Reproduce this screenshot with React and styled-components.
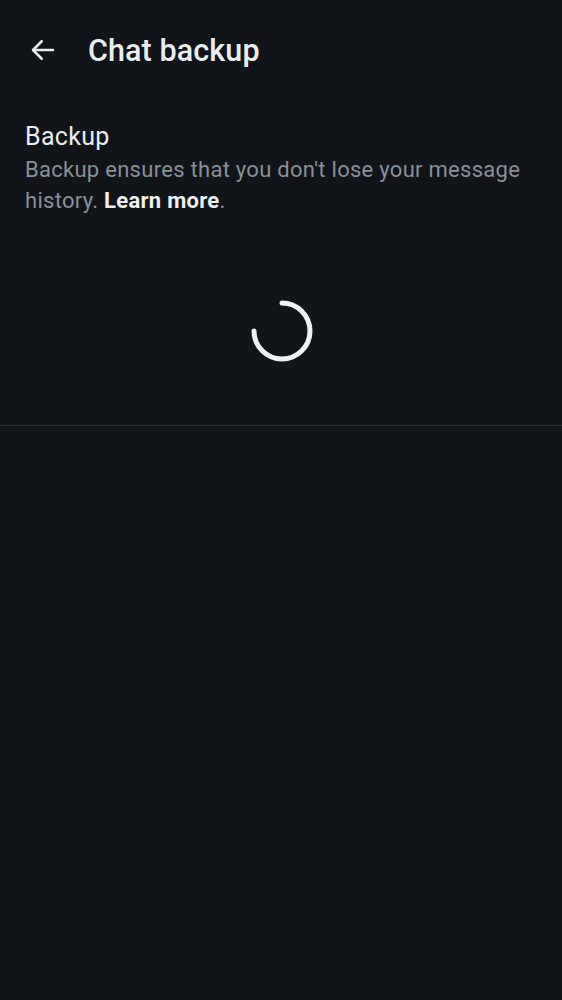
import React from "react";
import styled, { createGlobalStyle } from "styled-components";

const GlobalStyle = createGlobalStyle`
    html, body {
        margin: 0;
        padding: 0;
        background: #111419;
    }
    body {
        font-family: Roboto, "Noto Sans", sans-serif;
    }
`;

const Page = styled.div`
    width: 562px;
    min-height: 1000px;
    background: #111419;
    color: #e9edef;
`;

const Toolbar = styled.div`
    height: 100px;
    display: flex;
    align-items: center;
    padding-left: 28px;
    box-sizing: border-box;
`;

const BackButton = styled.button`
    width: 30px;
    height: 30px;
    padding: 0;
    border: none;
    background: none;
    color: #e9edef;
    display: flex;
    align-items: center;
    justify-content: center;
    margin-right: 30px;
`;

const Title = styled.h1`
    margin: 0;
    font-size: 30.5px;
    font-weight: 500;
    letter-spacing: 0.1px;
    color: #e9edef;
`;

const Section = styled.div`
    padding: 22px 25px 0;
`;

const Heading = styled.div`
    font-size: 25px;
    line-height: 30px;
    letter-spacing: 0.3px;
    color: #e9edef;
`;

const Description = styled.p`
    margin: 2px 0 0;
    font-size: 22px;
    line-height: 31px;
    color: #8a9097;
    letter-spacing: 0.28px;
`;

const Link = styled.a`
    color: #eef0f2;
    font-weight: 700;
    text-decoration: none;
`;

const SpinnerArea = styled.div`
    display: flex;
    justify-content: center;
    padding: 82px 0 61px 1px;
    border-bottom: 1px solid #2a2e34;
`;

const Spinner = () => (
    <svg width="66" height="66" viewBox="0 0 66 66" style={{ display: "block" }}>
        <path
            d="M33 5 A28 28 0 1 1 5 33"
            fill="none"
            stroke="#eef1f5"
            strokeWidth="5"
            strokeLinecap="round"
        />
    </svg>
);

const App = () => (
    <Page>
        <GlobalStyle />
        <Toolbar>
            <BackButton aria-label="Back">
                <svg width="30" height="30" viewBox="0 0 24 24" fill="none" stroke="currentColor" strokeWidth="2" strokeLinecap="round" strokeLinejoin="round">
                    <path d="M20 12H4.5" />
                    <path d="M11 5l-7 7 7 7" />
                </svg>
            </BackButton>
            <Title>Chat backup</Title>
        </Toolbar>
        <Section>
            <Heading>Backup</Heading>
            <Description>
                Backup ensures that you don't lose your message history. <Link href="#">Learn more</Link>.
            </Description>
        </Section>
        <SpinnerArea>
            <Spinner />
        </SpinnerArea>
    </Page>
);

export default App;
